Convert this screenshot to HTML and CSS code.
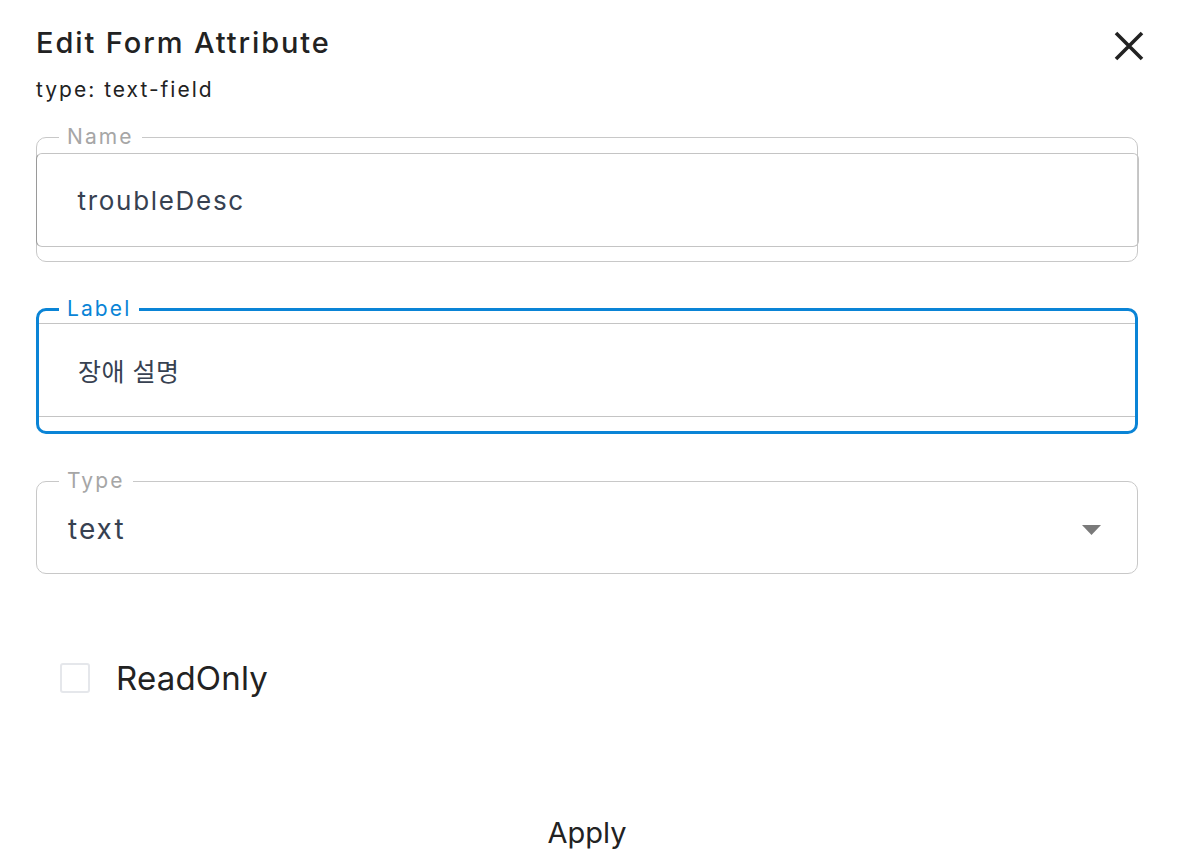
FILE: index.html
```html
<!DOCTYPE html>
<html lang="en">
<head>
<meta charset="utf-8">
<title>Edit Form Attribute</title>
<link rel="stylesheet" href="styles.css">
</head>
<body>
<div class="dialog">
  <header class="head">
    <div class="titles">
      <h1 class="title">Edit Form Attribute</h1>
      <p class="subtitle">type: text-field</p>
    </div>
    <button class="close" aria-label="Close">
      <svg width="30" height="30" viewBox="0 0 30 30"><path d="M2 2 L28 28 M28 2 L2 28" stroke="#222" stroke-width="3.6" stroke-linecap="butt" fill="none"/></svg>
    </button>
  </header>

  <div class="body">
    <fieldset class="field">
      <legend class="legend">Name</legend>
      <div class="input">troubleDesc</div>
    </fieldset>

    <fieldset class="field focused">
      <legend class="legend">Label</legend>
      <div class="input">장애 설명</div>
    </fieldset>

    <fieldset class="field select">
      <legend class="legend">Type</legend>
      <div class="select-row">
        <span class="select-value">text</span>
        <svg class="caret" width="19" height="10" viewBox="0 0 19 10"><path d="M0 0 H19 L9.5 10 Z" fill="#7a7a7a"/></svg>
      </div>
    </fieldset>

    <label class="check">
      <span class="box"></span>
      <span class="check-text">ReadOnly</span>
    </label>
  </div>

  <footer class="foot">
    <button class="apply">Apply</button>
  </footer>
</div>
</body>
</html>
```

FILE: styles.css
```css
* { box-sizing: border-box; }

html, body {
  margin: 0;
  padding: 0;
  background: #ffffff;
}

body {
  font-family: "Inter", "Noto Sans CJK KR", sans-serif;
  color: #222;
}

.dialog {
  width: 1178px;
  height: 860px;
  padding: 26px 40px 0 36px;
  display: flex;
  flex-direction: column;
}

.head {
  display: flex;
  justify-content: space-between;
  align-items: flex-start;
}

.title {
  margin: 0;
  font-size: 29px;
  line-height: 34px;
  font-weight: 500;
  color: #222;
  letter-spacing: 1.9px;
}

.subtitle {
  margin: 18px 0 0;
  font-size: 21px;
  line-height: 24px;
  font-weight: 400;
  color: #222;
  letter-spacing: 2px;
}

.close {
  margin: 5px -6px 0 0;
  padding: 0;
  border: 0;
  background: transparent;
  width: 30px;
  height: 30px;
  cursor: pointer;
}

.body {
  margin-top: 25px;
  display: flex;
  flex-direction: column;
}

.field {
  margin: 0;
  padding: 6px 0 14px;
  border: 1.5px solid #c8c8c8;
  border-radius: 10px;
  min-width: 0;
}

.field + .field {
  margin-top: 37px;
}

.legend {
  margin-left: 22px;
  padding: 0 8px;
  font-size: 21px;
  line-height: 20px;
  color: #a6a6a6;
  letter-spacing: 2.1px;
}

.input {
  height: 94px;
  margin: 0 -1.5px;
  padding: 0 41px;
  display: flex;
  align-items: center;
  font-size: 26px;
  letter-spacing: 1.7px;
  color: #374151;
  border: 1px solid #c4c4c4;
  border-left-color: #9a9a9a;
  border-radius: 6px;
}

.focused {
  border: 3px solid #0a84d6;
  padding: 4px 0 14px;
}

.focused .legend {
  color: #0a84d6;
  margin-left: 20px;
}

.focused .input {
  margin: 0;
  border-left: 0;
  border-right: 0;
  border-radius: 0;
  padding-left: 39px;
  font-size: 25px;
  letter-spacing: 0.5px;
}

.select {
  padding: 20px 0 26px;
}

.select-row {
  height: 36px;
  padding: 0 36px 0 31px;
  display: flex;
  align-items: center;
  justify-content: space-between;
}

.select-value {
  font-size: 28px;
  letter-spacing: 2px;
  color: #374151;
}

.caret {
  display: block;
  margin-top: 2px;
}

.check {
  margin-top: 87px;
  margin-left: 24px;
  display: flex;
  align-items: center;
  gap: 26px;
}

.box {
  width: 30px;
  height: 30px;
  border: 2px solid #e5e7eb;
  border-radius: 3px;
  background: #fff;
}

.check-text {
  font-size: 33px;
  line-height: 34px;
  color: #222;
  letter-spacing: 0.2px;
}

.foot {
  margin-top: auto;
  display: flex;
  justify-content: center;
  padding-bottom: 10px;
}

.apply {
  border: 0;
  background: transparent;
  font-family: inherit;
  font-size: 29px;
  line-height: 34px;
  color: #222;
  padding: 0;
  cursor: pointer;
}
```
